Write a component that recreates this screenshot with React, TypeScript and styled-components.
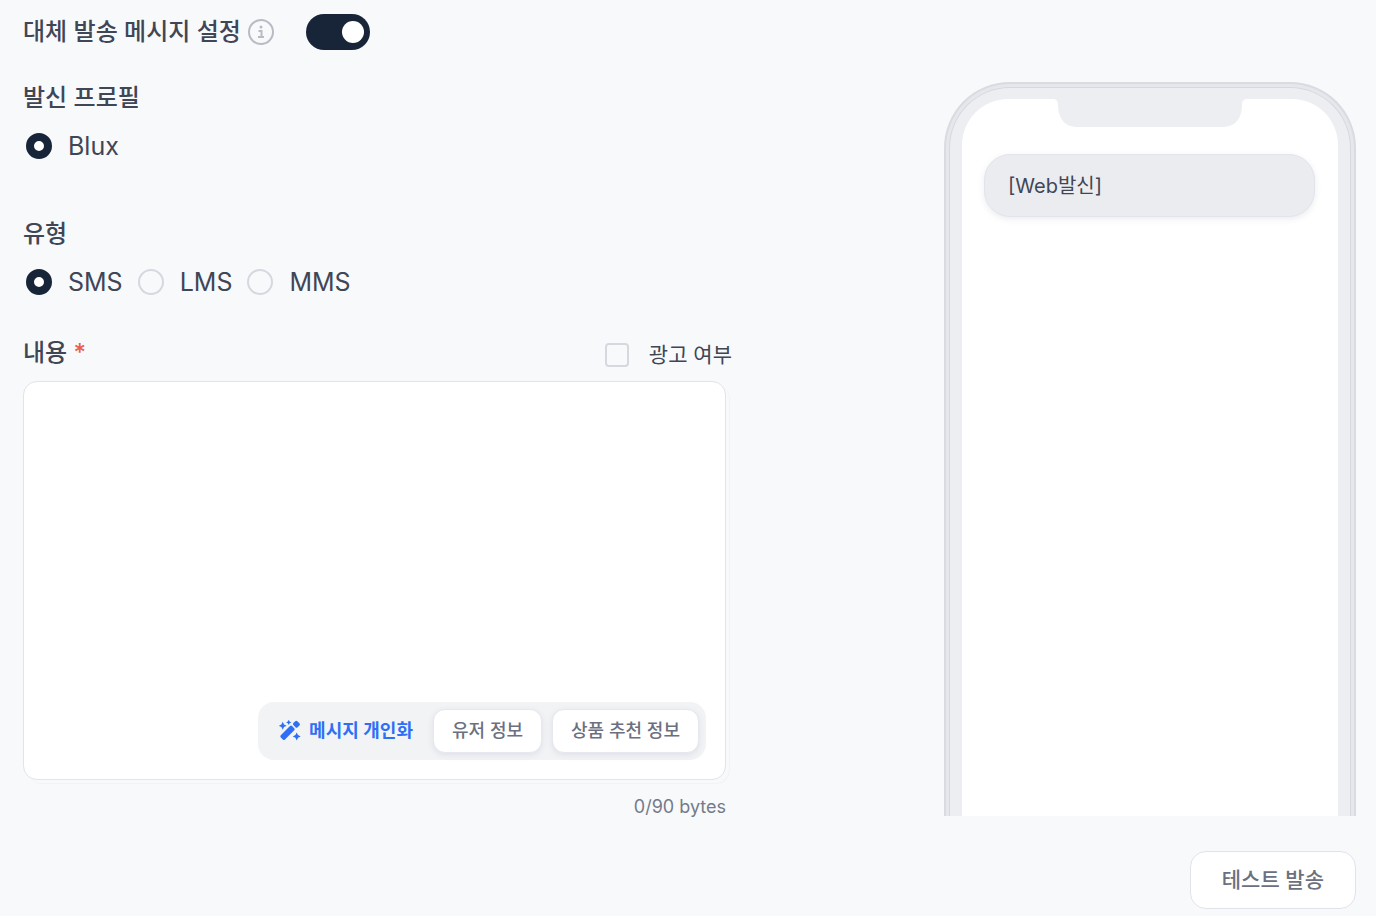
import React from 'react';
import styled, { createGlobalStyle } from 'styled-components';

const GlobalStyle = createGlobalStyle`
  *, *::before, *::after { box-sizing: border-box; }
  body {
    margin: 0;
    background: #f8f9fb;
    color: #3f4656;
    font-family: Inter, "Noto Sans CJK KR", sans-serif;
    font-size: 24px;
    line-height: 32px;
  }
  button, input, textarea { font-family: inherit; margin: 0; }
`;

const Page = styled.main`
  display: grid;
  grid-template-columns: minmax(0, 709px) 412px;
  justify-content: space-between;
  padding: 14px 20px 0 23px;
`;

const Form = styled.form`
  display: flex;
  flex-direction: column;
`;

const ToggleRow = styled.div`
  display: flex;
  align-items: center;
  height: 36px;
`;

const Title = styled.label`
  font-weight: 500;
`;

const InfoIcon = styled.svg`
  width: 26px;
  height: 26px;
  margin: 0 32px 0 7px;
`;

const Toggle = styled.input`
  appearance: none;
  display: flex;
  align-items: center;
  justify-content: flex-end;
  width: 64px;
  height: 36px;
  padding: 6px;
  border-radius: 18px;
  background: #182538;

  &::before {
    content: "";
    width: 22px;
    height: 22px;
    border-radius: 50%;
    background: #fff;
  }

  &:not(:checked) {
    justify-content: flex-start;
    background: #d6d8df;
  }
`;

const Group = styled.fieldset<{ $gap: number }>`
  border: 0;
  padding: 0;
  margin: ${(p) => p.$gap}px 0 0;
  min-width: 0;
`;

const Legend = styled.legend`
  padding: 0;
  margin-bottom: 16px;
  font-weight: 500;
`;

const Options = styled.div`
  display: flex;
  gap: 15px;
  padding-left: 3px;
  font-size: 25px;
`;

const Option = styled.label`
  display: flex;
  align-items: center;
  gap: 16px;
`;

const Radio = styled.input`
  appearance: none;
  width: 26px;
  height: 26px;
  border: 2px solid #d6d8df;
  border-radius: 50%;

  &:checked {
    border: 8px solid #182538;
    background: #fff;
  }
`;

const FieldHeader = styled.div`
  display: flex;
  justify-content: space-between;
  align-items: flex-start;
  margin-top: 39px;
  height: 34px;
`;

const Required = styled.span`
  color: #e5604d;
`;

const AdOption = styled.label`
  display: flex;
  align-items: center;
  align-self: flex-end;
  gap: 20px;
  font-size: 21px;
`;

const Checkbox = styled.input`
  appearance: none;
  width: 24px;
  height: 24px;
  border: 2px solid #d6d8df;
  border-radius: 4px;

  &:checked { background: #182538; }
`;

const Editor = styled.div`
  display: flex;
  flex-direction: column;
  height: 399px;
  margin: 10px 6px 0 0;
  padding: 0 19px 19px;
  border: 1px solid #e2e3eb;
  border-radius: 14px;
  background: #fff;
  box-shadow: 3px 3px 0 0 #f8f9fb, 4px 4px 0 0 #f2f3f6;
`;

const TextArea = styled.textarea`
  flex: 1;
  min-height: 0;
  padding: 20px 0;
  border: 0;
  outline: 0;
  resize: none;
  background: transparent;
  font-size: 21px;
`;

const Toolbar = styled.div`
  display: flex;
  align-items: center;
  align-self: flex-end;
  gap: 10px;
  height: 58px;
  padding: 0 7px 0 21px;
  border-radius: 16px;
  background: #f2f3f5;
  font-size: 18px;
`;

const Personalize = styled.span`
  display: flex;
  align-items: center;
  gap: 8px;
  margin-right: 10px;
  color: #2f6ff5;
  font-weight: 600;
`;

const WandIcon = styled.svg`
  width: 22px;
  height: 22px;
`;

const Chip = styled.button`
  height: 44px;
  padding: 0 18px;
  border: 1px solid #e6e7ef;
  border-radius: 12px;
  background: #fff;
  box-shadow: 0 2px 6px rgba(60, 65, 110, 0.1);
  color: #6b7080;
  font-size: 18px;
  font-weight: 500;
  line-height: 32px;
`;

const Counter = styled.output`
  align-self: flex-end;
  margin: 11px 6px 0 0;
  color: #757a89;
  font-size: 18px;
`;

const Preview = styled.aside`
  display: flex;
  flex-direction: column;
  padding-top: 68px;
`;

const Phone = styled.div`
  height: 734px;
  padding: 3px 3px 0;
  border: 2px solid #d9dbe1;
  border-bottom: 0;
  border-radius: 66px 66px 0 0;
  background: #e6e7ec;
`;

const Bezel = styled.div`
  height: 100%;
  padding: 11px 12px 0;
  border: 1px solid #d6d8de;
  border-bottom: 0;
  border-radius: 61px 61px 0 0;
  background: #edeef2;
`;

const Screen = styled.div`
  display: flex;
  flex-direction: column;
  height: 100%;
  border-radius: 46px 46px 0 0;
  background: #fff;
`;

const Notch = styled.svg`
  align-self: center;
  width: 192px;
  height: 28px;
`;

const Bubble = styled.p`
  margin: 27px 23px 0 22px;
  padding: 15px 23px 14px;
  border: 1px solid #e3e4eb;
  border-radius: 26px;
  background: #ebecf0;
  box-shadow: 0 2px 6px rgba(60, 65, 110, 0.1);
  font-size: 20px;
`;

const TestButton = styled.button`
  align-self: flex-end;
  height: 58px;
  margin-top: 35px;
  padding: 0 31px;
  border: 1px solid #e2e3ea;
  border-radius: 16px;
  background: #fff;
  color: #6b7080;
  font-size: 21px;
  font-weight: 500;
  line-height: 32px;
`;

export default function App() {
  return (
    <>
      <GlobalStyle />
      <Page>
        <Form>
          <ToggleRow>
            <Title htmlFor="fallback">대체 발송 메시지 설정</Title>
            <InfoIcon viewBox="0 0 26 26" fill="none" stroke="#b9bbc4" strokeWidth="2" aria-hidden="true">
              <circle cx="13" cy="13" r="12" />
              <path d="M10.5 12H13.5V18M10 18H16" />
              <circle cx="13" cy="8" r="1.5" fill="#b9bbc4" stroke="none" />
            </InfoIcon>
            <Toggle id="fallback" type="checkbox" role="switch" defaultChecked />
          </ToggleRow>

          <Group $gap={32}>
            <Legend>발신 프로필</Legend>
            <Options>
              <Option>
                <Radio type="radio" name="profile" defaultChecked />
                Blux
              </Option>
            </Options>
          </Group>

          <Group $gap={56}>
            <Legend>유형</Legend>
            <Options>
              {['SMS', 'LMS', 'MMS'].map((type, i) => (
                <Option key={type}>
                  <Radio type="radio" name="type" value={type} defaultChecked={i === 0} />
                  {type}
                </Option>
              ))}
            </Options>
          </Group>

          <FieldHeader>
            <Title htmlFor="content">
              내용 <Required>*</Required>
            </Title>
            <AdOption>
              <Checkbox type="checkbox" />
              광고 여부
            </AdOption>
          </FieldHeader>
          <Editor>
            <TextArea id="content" />
            <Toolbar>
              <Personalize>
                <WandIcon viewBox="0 0 22 22" fill="currentColor" aria-hidden="true">
                  <rect x="0.500" y="9.800" width="16" height="6" rx="1.500" transform="rotate(-45 8.5 12.8)" />
                  <rect x="14.600" y="1.200" width="5.600" height="6" rx="1.500" transform="rotate(-45 17.4 4.2)" />
                  <path d="M3.700 1.800L5 4.500L7.700 5.800L5 7.100L3.700 9.800L2.400 7.100L-0.300 5.800L2.400 4.500Z" />
                  <path d="M9.700 -0.200L10.600 1.500L12.300 2.400L10.600 3.300L9.700 5L8.800 3.300L7.100 2.400L8.800 1.500Z" />
                  <path d="M17.700 12.400L19 15.100L21.700 16.400L19 17.700L17.700 20.400L16.400 17.700L13.700 16.400L16.400 15.100Z" />
                </WandIcon>
                메시지 개인화
              </Personalize>
              <Chip type="button">유저 정보</Chip>
              <Chip type="button">상품 추천 정보</Chip>
            </Toolbar>
          </Editor>
          <Counter htmlFor="content">0/90 bytes</Counter>
        </Form>

        <Preview>
          <Phone>
            <Bezel>
              <Screen>
                <Notch viewBox="0 0 192 28" fill="#edeef2" aria-hidden="true">
                  <path d="M0 0H192Q188 1 188 5C188 19 182 28 168 28H24C10 28 4 19 4 5Q4 1 0 0Z" />
                </Notch>
                <Bubble>[Web발신]</Bubble>
              </Screen>
            </Bezel>
          </Phone>
          <TestButton type="button">테스트 발송</TestButton>
        </Preview>
      </Page>
    </>
  );
}
